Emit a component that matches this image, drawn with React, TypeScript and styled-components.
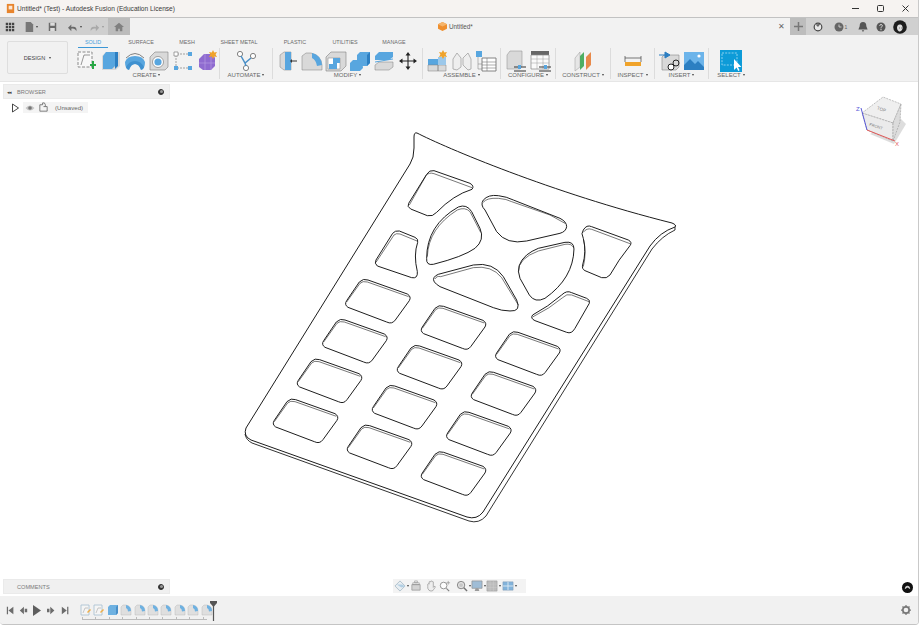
import React from "react";
import styled, { createGlobalStyle } from "styled-components";

const Global = createGlobalStyle`
  html, body { margin: 0; padding: 0; width: 919px; height: 625px; overflow: hidden; background: #fff; }
  body { font-family: "Liberation Sans", Arial, sans-serif; }
  * { box-sizing: border-box; }
`;

const Win = styled.div`
  width: 919px; height: 625px; display: flex; flex-direction: column; background: #fff;
  border-right: 1px solid #c9c9c9; border-bottom: 1px solid #c4c4c4; border-radius: 0 0 4px 4px; overflow: hidden;
`;
const TitleBar = styled.div`
  height: 18px; flex: none; display: flex; align-items: center; background: #f6f3f1; border-bottom: 1px solid #c2c2c2; padding: 0 0 0 5px;
`;
const TitleText = styled.div`font-size: 6.6px; color: #3a3a3a; flex: 1; white-space: nowrap; padding-left: 1px;`;
const WinBtn = styled.div`width: 25px; height: 17px; display: flex; align-items: center; justify-content: center; color: #333;`;
const AppBar = styled.div`height: 17px; flex: none; display: flex; background: #f2f2f2;`;
const Qat = styled.div`width: 108px; background: #cfcfcf; display: flex; align-items: center; padding-left: 5px;`;
const QatItem = styled.div<{ $w: number }>`width: ${p => p.$w}px; height: 100%; display: flex; align-items: center; gap: 2px; flex: none;`;
const HomeTab = styled.div`width: 22px; background: #bcbcbc; display: flex; align-items: center; justify-content: center;`;
const DocTab = styled.div`flex: 1; display: flex; align-items: center; justify-content: flex-end; padding-right: 5px; position: relative;`;
const DocTitle = styled.div`position: absolute; left: 308px; top: 3px; height: 11px; display: flex; align-items: center; gap: 2px; font-size: 6.3px; color: #555;`;
const CloseTab = styled.span`font-size: 8px; color: #666; line-height: 1;`;
const RightBar = styled.div`width: 128px; background: #d0d0d0; display: flex; align-items: center;`;
const PlusBtn = styled.div`width: 16px; height: 100%; background: #bdbdbd; display: flex; align-items: center; justify-content: center; margin-right: 3px;`;
const BarIcon = styled.div<{ $w: number }>`width: ${p => p.$w}px; display: flex; align-items: center; justify-content: center; flex: none; font-size: 5px; color: #666; gap: 1px;`;

const Ribbon = styled.div`height: 47px; flex: none; background: #f2f2f2; border-bottom: 1px solid #e6e6e6; display: flex; padding-left: 7px;`;
const DesignBtn = styled.div`
  width: 61px; height: 33px; margin-top: 6px; margin-right: 6px; flex: none; background: #f1f1f1; border: 1px solid #dedede; border-radius: 2px;
  display: flex; align-items: center; justify-content: center; gap: 4px; font-size: 5.6px; color: #444;
`;
const RibbonMain = styled.div`display: flex; flex-direction: column; flex: 1;`;
const Tabs = styled.div`display: flex; height: 13px; padding: 3px 0 0 4px;`;
const Tab = styled.div<{ $w: number; $on?: boolean }>`
  width: ${p => p.$w}px; height: 10px; text-align: center; font-size: 5.4px; line-height: 8px; white-space: nowrap;
  color: ${p => (p.$on ? "#45a0db" : "#6a6a6a")}; border-bottom: ${p => (p.$on ? "1.5px solid #3c97d6" : "none")};
`;
const Panels = styled.div`display: flex; height: 33px;`;
const Panel = styled.div<{ $w: number; $last?: boolean }>`
  width: ${p => p.$w}px; flex: none; display: flex; flex-direction: column; align-items: center; padding-top: 2px;
  position: relative; height: 31px;
  border-right: ${p => (p.$last ? "none" : "1px solid #dcdcdc")};
`;
const PanelIcons = styled.div`display: flex; gap: 2px; height: 22px; align-items: center;`;
const PanelLabel = styled.div`font-size: 6px; color: #666; margin-top: 0; display: flex; align-items: center; gap: 2px; white-space: nowrap;`;
const Caret = styled.span<{ $c?: string }>`
  display: inline-block; width: 0; height: 0; flex: none; border-left: 1.7px solid transparent; border-right: 1.7px solid transparent; border-top: 2.2px solid ${p => p.$c || "#444"};
`;

const Viewport = styled.div`flex: 1; position: relative; display: flex; flex-direction: column; justify-content: space-between; padding: 2px 0 2px 3px; min-height: 0;`;
const Canvas = styled.svg`position: absolute; inset: 0; width: 918px; height: 514px;`;
const SidePanel = styled.div`position: relative; width: 167px; height: 15px; background: #f0f0f0; border: 1px solid #eaeaea; display: flex; align-items: center; padding: 0 5px 0 3px; font-size: 5.6px; color: #7a7a7a;`;
const SideLabel = styled.div<{ $pad: number }>`flex: 1; padding-left: ${p => p.$pad}px;`;
const Rewind = styled.span`font-size: 5px; color: #444; letter-spacing: -1px; width: 8px;`;
const Dot = styled.span`width: 6px; height: 6px; border-radius: 50%; background: #333; border: 1.5px solid #333; position: relative;
  &::after { content: ""; position: absolute; inset: 0.5px; background: #999; border-radius: 50%; }`;
const TopLeft = styled.div`position: relative; display: flex; flex-direction: column; gap: 3px;`;
const TreeRow = styled.div`display: flex; align-items: center; height: 11px; padding-left: 8px; gap: 2px;`;
const TreeBody = styled.div`display: flex; align-items: center; gap: 3px; background: #f4f4f4; height: 11px; padding: 0 5px 0 2px; font-size: 6.1px; color: #666;`;
const Unsaved = styled.span`margin-left: 3px;`;
const NavBar = styled.div`position: absolute; left: 393px; bottom: 3px; height: 14px; width: 133px; background: #f3f3f3; display: flex; align-items: center; padding-left: 1px;`;
const NavItem = styled.div<{ $ml?: number }>`display: flex; align-items: center; gap: 1px; margin-left: ${p => p.$ml || 0}px; flex: none;
  svg { opacity: .82; }`;
const Badge = styled.div`position: absolute; right: 5px; bottom: 3px; width: 11px; height: 11px; border-radius: 50%; background: #111; display: flex; align-items: center; justify-content: center;`;
const CubeWrap = styled.svg`position: absolute; right: 9px; top: 10px; width: 56px; height: 62px;`;

const Timeline = styled.div`height: 28px; flex: none; background: #f1f1f1; display: flex; align-items: center; padding: 2px 7px 2px 4px; position: relative;`;
const PlayBtns = styled.div`display: flex; align-items: center; gap: 4.3px; width: 76px; flex: none; padding-left: 1.5px; svg { opacity: .85; }`;
const Steps = styled.div`display: flex; flex-direction: column; gap: 1px; margin-top: 3px;`;
const StepRow = styled.div`display: flex; gap: 1.4px; svg { opacity: .85; }`;
const Ruler = styled.div`height: 3px; width: 125px; margin-left: 2px; border-bottom: 1px solid #bbb;
  background: repeating-linear-gradient(90deg, #bbb 0 1px, transparent 1px 13.4px);`;
const Marker = styled.svg`width: 7px; height: 20px; margin-left: -3px; flex: none; margin-top: 2px;`;
const Spacer = styled.div`flex: 1;`;

const B = "#58a6df", D = "#2c7fc2", G = "#d9d9d9", L = "#7f7f7f", O = "#f0a32a";

const glyphs: Record<string, React.ReactNode> = {
  orange: <><path d="M2 1h8v10H2z" fill="#e8842c" /><path d="M4 3h4v4H4z" fill="#fff" opacity=".8" /></>,
  sketch: <>
    <path d="M2 2h14v15H2z" fill="#f8f8f8" stroke={L} strokeWidth=".9" strokeDasharray="3 1.5" />
    <path d="M5 15 8 5h6" fill="none" stroke={L} strokeWidth=".8" /><path d="M14 14h6v2h-6zM16 11h2v8h-2z" fill="#28a745" /></>,
  box: <><path d="M2 6 6 2h14v14l-4 4H2z" fill={G} /><path d="M3 6 6 2h9v14l-3 3H3z" fill={B} /><path d="M15 2h3v14l-3 3z" fill={D} /></>,
  revolve: <><path d="M2 8Q11 -1 20 8" fill="none" stroke="#666" strokeWidth=".8" /><path d="M1 12Q3 6 11 6t10 6q0 7-4 8-2-6-6-6t-6 6Q1 19 1 12z" fill={B} /><path d="M5 20q2-6 6-6t6 6q2 0 3-3-3-6-9-6t-9 6q1 3 3 3z" fill={D} opacity=".55" /></>,
  hole: <><path d="M2 7 7 2h13v15l-3 3H2z" fill={G} stroke={L} strokeWidth=".6" /><circle cx="10" cy="12" r="5.5" fill="#fff" stroke={L} strokeWidth=".7" /><circle cx="10" cy="12" r="3.6" fill={B} /></>,
  rect: <>
    <path d="M5 4h12M4 5v12M5 18h12" stroke={L} strokeWidth=".7" strokeDasharray="2 1" fill="none" />
    <path d="M2 2h4v4H2z" fill="#fff" stroke={L} strokeWidth=".7" /><path d="M16 2h4v4h-4zM2 16h4v4H2zM16 16h4v4h-4z" fill={B} /></>,
  purple: <><path d="M3 9 8 4h9l2 4v8l-4 4H7l-4-3z" fill="#8f6bd0" /><path d="M3 13h16M9 4v16M15 7v13" stroke="#b49be3" strokeWidth=".7" /><path d="M17 0l1.2 2.6L21 2l-1.4 2.4L21 7l-2.8-.6L17 9l-1.2-2.6L13 7l1.4-2.6L13 2l2.8.6z" fill={O} /></>,
  automate: <><circle cx="5" cy="4" r="2.6" fill="#fff" stroke={L} /><circle cx="18" cy="6" r="2.6" fill="#fff" stroke={L} /><circle cx="11" cy="18" r="2.6" fill="#fff" stroke={L} /><path d="M6 6 10 13 16 8M10 13 11 16" fill="none" stroke="#4a8fc7" strokeWidth="1.5" /></>,
  press: <><path d="M3 5 7 2h7v18H7l-4-3z" fill={G} stroke={L} strokeWidth=".5" /><path d="M8 2h6v18H8z" fill={B} /><path d="M15 11h5" stroke="#333" /><path d="M15 9v4l-2-2z" fill="#333" /></>,
  fillet: <><path d="M1 6 5 3h5q10 2 11 12v5H1z" fill={G} stroke={L} strokeWidth=".5" /><path d="M11 3q9 2 10 12l-5 1q-1-6-5-8z" fill={B} /></>,
  shell: <><path d="M1 7 6 2h15v14l-5 5H1z" fill={G} stroke={L} strokeWidth=".6" /><path d="M3 8h12v11H3z" fill="#fff" stroke={L} strokeWidth=".5" /><path d="M8 8h7v5H12v6H4v-5h4z" fill={B} /></>,
  combine: <><path d="M1 13l3-3h9l1 8-3 3H1z" fill={B} /><path d="M8 5l3-3h10v11l-3 3H8z" fill={B} /><path d="M18 16V5l3-3v11z" fill={D} /></>,
  split: <><path d="M2 6 6 2h14v5l-4 3H2z" fill={B} /><path d="M2 15 6 12h14v5l-4 3H2z" fill={G} stroke={L} strokeWidth=".5" /><path d="M2 12 20 9" stroke={B} strokeWidth="1" /></>,
  move: <><path d="M11 4v14M4 11h14" stroke="#222" strokeWidth="1.1" /><path d="M11 2l2.500 3.500h-5zM11 20l-2.500-3.500h5zM2 11l3.500-2.500v5zM20 11l-3.500 2.500v-5z" fill="#222" /></>,
  newcomp: <><path d="M1 9h10v6H1z" fill={B} /><path d="M1 15h10v6H1zM11 15h8v6h-8z" fill={G} stroke={L} strokeWidth=".5" /><path d="M11 7h8v8h-8z" fill="#9cc8ea" /><path d="M16 0l1.3 2.6L20 2l-1.4 2.4L20 7l-2.7-.6L16 9l-1.3-2.6L12 7l1.4-2.6L12 2l2.7.6z" fill={O} /></>,
  joint: <path d="M2 19V9l4-6 4 5v9l-4 3zM12 8l5-5 3 6v10l-3 1-5-5z" fill="#eee" stroke="#aaa" strokeWidth=".9" />,
  table: <><path d="M1 1h6v6H1z" fill={B} /><path d="M7 8h14v13H7z" fill="#fff" stroke="#777" strokeWidth=".9" /><path d="M7 12h14M7 15h14M7 18h14M12 8v13" stroke="#777" strokeWidth=".6" /><path d="M3 7v7h4M3 14v5h4" stroke="#777" strokeWidth=".5" fill="none" /></>,
  cfg: <><path d="M2 5 5 1h12v15l-2 3H2z" fill={G} stroke="#999" strokeWidth=".6" /><path d="M9 17h12M9 21h12" stroke="#333" /><path d="M13 15h3v4h-3z" fill={B} /></>,
  cfgt: <><path d="M2 1h18v4H2z" fill="#666" /><path d="M2 5h18v14H2z" fill="#fafafa" stroke="#888" strokeWidth=".7" /><path d="M2 9h18M2 13h18M8 5v14M14 5v14" stroke="#999" strokeWidth=".5" /><path d="M10 17h12M10 21h12" stroke="#333" /><path d="M15 15h3v4h-3z" fill={B} /></>,
  construct: <><path d="M3 8l5-6v15l-5 4z" fill="#e6e6e6" stroke="#999" strokeWidth=".5" /><path d="M8 6l4-4v14l-4 4z" fill="#4fae62" /><path d="M14 7l5-5v13l-5 5z" fill="#e8894a" /></>,
  inspect: <><path d="M3 6v6M19 6v6M3 8h16" stroke="#444" strokeWidth=".7" fill="none" /><path d="M3 12h16v4H3z" fill={O} /></>,
  ins1: <><path d="M3 7l2-2h15v12l-3 3H3z" fill={G} stroke="#888" strokeWidth=".6" /><path d="M0 5h8M6 2l5 3-5 3z" fill={D} stroke={D} /><circle cx="12" cy="17" r="3" fill="#fff" stroke="#222" /><circle cx="17" cy="13" r="3" fill="none" stroke="#222" /></>,
  ins2: <><path d="M1 2h20v18H1z" fill="#6cb4ea" /><path d="M1 20v-5l6-6 5 5 3-3 6 6v3z" fill="#2c7fc2" /><circle cx="16" cy="6" r="1.6" fill="#fff" /></>,
  select: <><path d="M0 0h22v22H0z" fill="#0d9bd8" /><path d="M2 3h15v12H2z" fill="none" stroke="#bfe8fa" strokeWidth=".7" strokeDasharray="2 1.2" /><path d="M14 9l0 11 2.6-2.6 1.6 3.6 1.4-.7-1.6-3.4 3.4 0z" fill="#fff" /></>,
  grid3: <path d="M1 1h3v3H1zM5 1h3v3H5zM9 1h3v3H9zM1 5h3v3H1zM5 5h3v3H5zM9 5h3v3H9zM1 9h3v3H1zM5 9h3v3H5zM9 9h3v3H9z" fill="#444" />,
  file: <path d="M2 0h6l3 3v9H2z" fill="#777" />,
  save: <><path d="M1 1h10v11H1z" fill="#6a6a6a" /><path d="M3 1h6v4H3zM3 8h6v4H3z" fill="#ddd" /></>,
  undo: <path d="M10 11c1-4-1-6-6-5V3L0 7l4 4V8c3-.5 5 .5 6 3z" fill="#6a6a6a" />,
  redo: <path d="M1 11c-1-4 1-6 6-5V3l4 4-4 4V8c-3-.5-5 .5-6 3z" fill="#a9a9a9" />,
  home: <path d="M6 1 0 6h2v5h3V8h2v3h3V6h2z" fill="#808080" />,
  plus: <path d="M5 0h2v5h5v2H7v5H5V7H0V5h5z" fill="#777" />,
  ring: <><circle cx="6" cy="6" r="4.6" fill="#e8e8e8" stroke="#444" strokeWidth="1.4" /><path d="M3 3l3 3 3-4" fill="#666" /></>,
  clock: <><circle cx="6" cy="6" r="5.4" fill="#666" /><path d="M6 3v3h3" stroke="#ddd" fill="none" /></>,
  bell: <path d="M6 0q4 0 4 5l1.5 4h-11L2 5q0-5 4-5zM4.5 10h3L6 12z" fill="#555" />,
  help: <><circle cx="6" cy="6" r="5.4" fill="#555" /><path d="M4.4 4.6Q4.6 3 6 3t1.7 1.4Q7.7 5.4 6.6 6T6 7.6" stroke="#eee" fill="none" /><circle cx="6" cy="9.2" r=".7" fill="#eee" /></>,
  avatar: <><circle cx="7" cy="7" r="6.8" fill="#1d1d1d" /><path d="M4 8q0-4 3.5-3.5 2.5.5 2 4.5-1.5 3-3.5 2.5Q4 10.5 4 8z" fill="#ddd" /><path d="M6 8h.8M8 8h.8" stroke="#222" strokeWidth=".6" /></>,
  tri: <path d="M1.5 1v8l6-4z" fill="#fff" stroke="#333" strokeWidth=".9" />,
  eye: <><path d="M.5 5Q5 0 9.500 5 5 10 .5 5z" fill="#c4c4c4" /><circle cx="5" cy="5" r="1.8" fill="#777" /></>,
  docs: <path d="M2 9V3h3l0-2h2l1 2v2h2v5H2zM6 5h2" fill="#f4f4f4" stroke="#555" strokeWidth=".8" />,
  orbit: <><path d="M6.500 1 12 6.500 6.500 12 1 6.500z" fill="#e6edf2" stroke="#7f9bb0" strokeWidth=".7" /><path d="M3 5h6l3 2-4 1z" fill="#a6c8e0" /></>,
  look: <><path d="M2 5h9v6H2z" fill="#ccc" stroke="#777" strokeWidth=".7" /><path d="M3 3h7v2H3zM5 1h3v2H5z" fill="none" stroke="#777" strokeWidth=".6" /></>,
  pan: <path d="M3 7V4.500q1-1 1.500 0V2q1-1 1.500 0v-.5q1-1 1.500 0V2q1-.7 1.500 0v6q1-1.500 2-1 .5 1-1.500 3Q9 12 6.500 12 4 12 3 9z" fill="#eee" stroke="#777" strokeWidth=".7" />,
  zfit: <><circle cx="5" cy="6" r="3.600" fill="#fff" stroke="#777" /><path d="M8 9l3 3" stroke="#666" strokeWidth="1.200" /><path d="M10 1v4M8 3h4" stroke="#777" strokeWidth=".7" /></>,
  zoom: <><circle cx="5.500" cy="5.500" r="4" fill="#ddd" stroke="#666" /><circle cx="5.500" cy="5.500" r="2" fill="#bbb" /><path d="M8.500 8.500l3.500 3.500" stroke="#555" strokeWidth="1.500" /></>,
  display: <><path d="M1 1h11v8H1z" fill="#8fb2d0" stroke="#777" strokeWidth=".7" /><path d="M4 12h5l-1-3H5z" fill="#888" /></>,
  gridv: <><path d="M1 1h11v11H1z" fill="#b0b0b0" stroke="#888" strokeWidth=".6" /><path d="M1 4.500h11M1 8h11M4.500 1v11M8 1v11" stroke="#ccc" strokeWidth=".4" /></>,
  views: <><path d="M1 2h11v9H1z" fill="#6aa6d6" stroke="#6b8dab" strokeWidth=".6" /><path d="M6.500 2v9M1 6.500h11" stroke="#d8e8f4" /></>,
  first: <path d="M1 1h1.500v9H1zM9 1v9L3 5.500z" fill="#555" />,
  prev: <path d="M6 1v9L1 5.500zM7 3.500h3v4H7z" fill="#555" />,
  play: <path d="M1 0v11l8-5.500z" fill="#444" />,
  next: <path d="M4 1v9l5-4.500zM0 3.500h3v4H0z" fill="#555" />,
  last: <path d="M7.500 1H9v9H7.500zM1 1v9l6-4.500z" fill="#555" />,
  stepS: <><path d="M1 1h8v10H1z" fill="#f6f6f6" stroke="#9ab6cc" strokeWidth=".8" /><path d="M3 9l2-5h3" stroke="#999" strokeWidth=".6" fill="none" /><path d="M7 8l3-3 1 1-3 3z" fill={O} /></>,
  stepB: <><path d="M1 3l2-2h8v8l-2 2H1z" fill={B} /><path d="M9 3l2-2v8l-2 2z" fill={D} /></>,
  stepF: <><path d="M1 3l2-2h3q5 1 5 6v4H1z" fill="#ddd" stroke="#aaa" strokeWidth=".4" /><path d="M6 1q5 1 5 6l-3 .4Q8 5 6 4z" fill={B} /></>,
  gear: <><circle cx="6" cy="6" r="3.800" fill="none" stroke="#777" strokeWidth="2" /><path d="M6 0v2M6 10v2M0 6h2M10 6h2M1.800 1.800l1.400 1.400M8.800 8.800l1.400 1.400M1.800 10.200l1.400-1.400M8.800 3.200l1.400-1.400" stroke="#777" strokeWidth="1.500" /></>,
  chat: <path d="M2 7q0-4 3-4t3 4L5 5z" fill="#ccc" />,
};

const IconSvg = styled.svg`display: block; flex: none; overflow: visible;`;
const Icon = ({ n, s = 22, box }: { n: string; s?: number; box?: number }) => (
  <IconSvg width={s} height={s} viewBox={`0 0 ${box ?? s} ${box ?? s}`}>{glyphs[n]}</IconSvg>
);

const Hole = "M-12 8Q0-4 14 2L132 44Q145 52 138 64L96 122Q86 136 70 128L-46 84Q-58 76-50 64Z";
const HoleIn = "M-50 68L-10 12Q-2 4 12 8L136 52";
const holes = [
  [385, 28], [316, 148], [240, 267], [168, 387],
  [612, 107], [540, 226], [465, 346], [390, 465],
  [835, 185], [762, 305], [688, 425], [612, 545],
];
const custom = [
  ["M170 148Q178 134 192 137L300 175Q314 183 306 193 250 210 200 262 188 276 172 272L122 252Q110 245 116 235Z", "M118 240L168 152Q176 141 192 146L306 188"],
  ["M68 325Q75 316 88 318L135 337Q146 342 143 352 130 390 142 440 144 462 125 458L22 423Q12 415 18 405Z", "M18 412L72 330Q78 324 90 327L141 348"],
  ["M265 246Q290 236 305 260L330 310Q345 345 315 370 280 395 190 418 168 422 170 400 170 300 265 246Z", "M172 395Q175 310 262 255 285 245 300 260L332 322"],
  ["M340 225Q355 208 385 212 410 215 430 225L570 280Q590 290 590 305 588 320 570 325L470 348Q410 360 380 320L345 255Q330 240 340 225Z", "M340 232Q350 218 385 220 410 222 425 230L540 270 585 295"],
  ["M640 315Q650 298 665 305L775 345Q788 352 780 362 745 405 720 450 710 462 695 458L645 437Q635 432 638 420 650 380 640 340 632 325 640 315Z", "M640 322Q650 308 665 313L780 356M641 345Q650 385 640 425"],
  ["M505 370L585 352Q612 348 612 372 610 460 525 520 495 535 478 510L450 460Q435 420 470 390 485 378 505 370Z", "M445 440Q445 400 505 378L585 358Q605 355 611 368"],
  ["M205 448L310 420Q370 410 400 455L440 525Q455 560 420 558 395 558 370 548L210 485Q185 470 192 458 195 452 205 448Z", "M195 462Q200 452 212 455L310 428Q365 420 395 458L445 540"],
  ["M575 510Q590 495 605 503L650 520Q662 525 658 535L615 610Q605 628 590 622L495 587Q480 580 488 570 535 545 575 510Z", "M488 576Q540 550 578 518 590 505 605 510L657 530"],
];

const Part = () => (
  <Canvas viewBox="0 82 918 514">
    <g fill="none" stroke="#1c1c1c" strokeLinejoin="round">
      <path strokeWidth="1" d="M417 133C444 147 552 193 672 223Q677 225 675 227 660 232 650 246L483 512Q477 520 467 517L251 440Q243 436 246 428L410 164Q414 158 414 148L414 137Q414 132 417 133Z" />
      <path strokeWidth=".9" d="M675 227L675 230Q662 236 652 249L486 516Q479 524 469 521L252 443Q246 440 245 434" />
      <g transform="translate(235 270) scale(.3333)">
        {holes.map(([x, y]) => (
          <g key={`${x}-${y}`} transform={`translate(${x} ${y})`}>
            <path d={Hole} strokeWidth="3" />
            <path d={HoleIn} strokeWidth="1.8" />
          </g>
        ))}
      </g>
      <g transform="translate(370 125) scale(.3333)">
        {custom.map(([a, b]) => (
          <g key={a}>
            <path d={a} strokeWidth="3" />
            <path d={b} strokeWidth="1.8" />
          </g>
        ))}
      </g>
    </g>
  </Canvas>
);

const ViewCube = () => (
  <CubeWrap viewBox="853 92 56 62">
    <path d="M870 134l24 10 12-20-6-6z" fill="#cfcfcf" opacity=".7" />
    <path d="M862 113l21-16 18 7-8 19z" fill="#efefef" stroke="#999" strokeWidth=".6" strokeDasharray="2 1" />
    <path d="M862 113l31 10v18l-26-11z" fill="#ebebeb" stroke="#999" strokeWidth=".6" strokeDasharray="2 1" />
    <path d="M893 123l8-19-1 18-7 19z" fill="#dcdcdc" stroke="#999" strokeWidth=".6" strokeDasharray="2 1" />
    <path d="M867 130l-6-22" stroke="#5a5ad8" strokeWidth="1" />
    <path d="M867 130l28 11" stroke="#e25a5a" strokeWidth="1" />
    <text x="856" y="111" fontSize="6" fill="#5a5ad8" fontFamily="Liberation Sans">Z</text>
    <text x="895" y="146" fontSize="6" fill="#e25a5a" fontFamily="Liberation Sans">X</text>
    <text x="877" y="111" fontSize="4.500" fill="#888" fontFamily="Liberation Sans" transform="rotate(18 882 109)">TOP</text>
    <text x="869" y="128" fontSize="4" fill="#888" fontFamily="Liberation Sans" transform="rotate(18 877 127)">FRONT</text>
  </CubeWrap>
);

const panels = [
  { label: "CREATE", w: 146, icons: ["sketch", "box", "revolve", "hole", "rect", "purple"] },
  { label: "AUTOMATE", w: 53, icons: ["automate"] },
  { label: "MODIFY", w: 150, icons: ["press", "fillet", "shell", "combine", "split", "move"] },
  { label: "ASSEMBLE", w: 78, icons: ["newcomp", "joint", "table"] },
  { label: "CONFIGURE", w: 55, icons: ["cfg", "cfgt"] },
  { label: "CONSTRUCT", w: 55, icons: ["construct"] },
  { label: "INSPECT", w: 44, icons: ["inspect"] },
  { label: "INSERT", w: 54, icons: ["ins1", "ins2"] },
  { label: "SELECT", w: 44, icons: ["select"], last: true },
];
const tabs: [string, number][] = [["SOLID", 30], ["SURFACE", 66], ["MESH", 26], ["SHEET METAL", 78], ["PLASTIC", 34], ["UTILITIES", 66], ["MANAGE", 32]];
const stepNames = ["stepS", "stepS", "stepB", "stepF", "stepF", "stepF", "stepF", "stepF", "stepF", "stepF"];

export default function App() {
  return (
    <Win>
      <Global />
      <TitleBar>
        <Icon n="orange" s={11} box={12} />
        <TitleText>Untitled* (Test) - Autodesk Fusion (Education License)</TitleText>
        <WinBtn><IconSvg width="9" height="9" viewBox="0 0 9 9"><path d="M1 4.500h7" stroke="#333" /></IconSvg></WinBtn>
        <WinBtn><IconSvg width="9" height="9" viewBox="0 0 9 9"><rect x="1.500" y="1.500" width="6" height="6" rx="1" fill="none" stroke="#333" /></IconSvg></WinBtn>
        <WinBtn><IconSvg width="9" height="9" viewBox="0 0 9 9"><path d="M1.500 1.500l6 6M7.500 1.500l-6 6" stroke="#333" /></IconSvg></WinBtn>
      </TitleBar>
      <AppBar>
        <Qat>
          <QatItem $w={19}><Icon n="grid3" s={10} box={13} /></QatItem>
          <QatItem $w={24}><Icon n="file" s={10} box={12} /><Caret /></QatItem>
          <QatItem $w={20}><Icon n="save" s={9} box={12} /></QatItem>
          <QatItem $w={22}><Icon n="undo" s={10} box={12} /><Caret /></QatItem>
          <QatItem $w={18}><Icon n="redo" s={10} box={12} /><Caret $c="#999" /></QatItem>
        </Qat>
        <HomeTab><Icon n="home" s={10} box={12} /></HomeTab>
        <DocTab>
          <DocTitle>
            <IconSvg width="9" height="9" viewBox="0 0 9 9"><path d="M4.500 0 9 2.200v4.600L4.500 9 0 6.800V2.200z" fill="#ef8f2e" /><path d="M0 2.200 4.500 4.500 9 2.200 4.500 0z" fill="#f6b56c" /></IconSvg>
            Untitled*
          </DocTitle>
          <CloseTab>✕</CloseTab>
        </DocTab>
        <RightBar>
          <PlusBtn><Icon n="plus" s={9} box={12} /></PlusBtn>
          <BarIcon $w={18}><Icon n="ring" s={10} box={12} /></BarIcon>
          <BarIcon $w={27}><Icon n="clock" s={10} box={12} />1</BarIcon>
          <BarIcon $w={18}><Icon n="bell" s={10} box={12} /></BarIcon>
          <BarIcon $w={18}><Icon n="help" s={10} box={12} /></BarIcon>
          <BarIcon $w={20}><Icon n="avatar" s={14} /></BarIcon>
        </RightBar>
      </AppBar>
      <Ribbon>
        <DesignBtn>DESIGN <Caret /></DesignBtn>
        <RibbonMain>
          <Tabs>{tabs.map(([t, w], i) => <Tab key={t} $w={w} $on={i === 0}>{t}</Tab>)}</Tabs>
          <Panels>
            {panels.map(p => (
              <Panel key={p.label} $w={p.w} $last={p.last}>
                <PanelIcons>{p.icons.map(n => <Icon key={n} n={n} />)}</PanelIcons>
                <PanelLabel>{p.label} <Caret /></PanelLabel>
              </Panel>
            ))}
          </Panels>
        </RibbonMain>
      </Ribbon>
      <Viewport>
        <Part />
        <ViewCube />
        <TopLeft>
          <SidePanel><Rewind>◂◂</Rewind><SideLabel $pad={2}>BROWSER</SideLabel><Dot /></SidePanel>
          <TreeRow>
            <Icon n="tri" s={10} />
            <TreeBody><Icon n="eye" s={10} /><Icon n="docs" s={11} box={12} /><Unsaved>(Unsaved)</Unsaved></TreeBody>
          </TreeRow>
        </TopLeft>
        <SidePanel><SideLabel $pad={10}>COMMENTS</SideLabel><Dot /></SidePanel>
        <NavBar>
          <NavItem><Icon n="orbit" s={12} box={13} /><Caret /></NavItem>
          <NavItem $ml={1}><Icon n="look" s={12} box={13} /></NavItem>
          <NavItem $ml={3}><Icon n="pan" s={12} box={13} /></NavItem>
          <NavItem $ml={2}><Icon n="zfit" s={12} box={13} /></NavItem>
          <NavItem $ml={5}><Icon n="zoom" s={12} box={13} /><Caret /></NavItem>
          <NavItem><Icon n="display" s={12} box={13} /><Caret /></NavItem>
          <NavItem><Icon n="gridv" s={12} box={13} /><Caret /></NavItem>
          <NavItem $ml={1}><Icon n="views" s={12} box={13} /><Caret /></NavItem>
        </NavBar>
        <Badge><Icon n="chat" s={9} box={10} /></Badge>
      </Viewport>
      <Timeline>
        <PlayBtns>
          <Icon n="first" s={9} box={11} />
          <Icon n="prev" s={9} box={11} />
          <Icon n="play" s={11} />
          <Icon n="next" s={9} box={11} />
          <Icon n="last" s={9} box={11} />
        </PlayBtns>
        <Steps>
          <StepRow>{stepNames.map((n, i) => <Icon key={i} n={n} s={12} />)}</StepRow>
          <Ruler />
        </Steps>
        <Marker viewBox="0 0 7 20"><path d="M0 0h7v2L3.500 6 0 2z" fill="#555" /><path d="M3.500 4v16" stroke="#555" strokeWidth="1.200" /></Marker>
        <Spacer />
        <Icon n="gear" s={10} box={12} />
      </Timeline>
    </Win>
  );
}
